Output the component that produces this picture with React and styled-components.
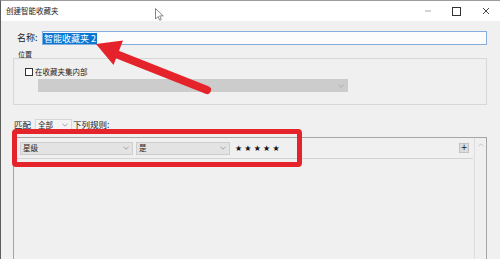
import React from 'react';
import styled, { createGlobalStyle } from 'styled-components';

// page reset
const GlobalStyle = createGlobalStyle`
  html, body {
    margin: 0;
    padding: 0;
    background: #f0f0f0;
  }
  body {
    font-family: "Noto Sans CJK SC", "Noto Sans", sans-serif;
    color: #000;
  }
  * {
    box-sizing: border-box;
  }
`;

const Window = styled.div`
  position: relative;
  width: 500px;
  height: 259px;
  overflow: hidden;
  display: flex;
  flex-direction: column;
  background: #f0f0f0;
  border-left: 1px solid #5c5c5c;
  border-top: 1px solid #9c9c9c;
`;

const TitleBar = styled.div`
  display: flex;
  align-items: center;
  height: 20px;
  flex: none;
  background: #fff;
  padding-left: 5px;
`;

const Title = styled.span`
  font-size: 7.5px;
  line-height: 10px;
  color: #1a1a1a;
`;

const Controls = styled.div`
  display: flex;
  margin-left: auto;
  height: 100%;
`;

const ControlCell = styled.div`
  width: 29px;
  height: 100%;
  display: flex;
  align-items: center;
  justify-content: center;
  color: ${({ dim }) => (dim ? '#a8a8a8' : '#333')};
`;

const Body = styled.div`
  flex: 1;
  display: flex;
  flex-direction: column;
  padding: 0 13px 0 12px;
`;

const NameRow = styled.div`
  display: flex;
  align-items: center;
  margin-top: 10px;
  height: 14px;
`;

const NameLabel = styled.span`
  flex: none;
  width: 25px;
  margin-left: 4px;
  font-size: 9px;
  line-height: 14px;
  color: #222;
`;

const NameInput = styled.div`
  flex: 1;
  height: 14px;
  border: 1px solid #86aedc;
  background: #fcfcfc;
  display: flex;
  align-items: center;
`;

const Selected = styled.span`
  background: #0a77d5;
  color: #fff;
  font-size: 9px;
  line-height: 11px;
  height: 11px;
  padding: 0 1px;
  white-space: pre;
`;

const GroupLabel = styled.div`
  margin: 5px 0 0 5px;
  font-size: 7px;
  line-height: 8px;
  height: 8px;
  color: #222;
`;

const GroupBox = styled.div`
  height: 47px;
  border: 1px solid #d7d7d7;
  padding: 9px 0 0 11px;
`;

const CheckRow = styled.label`
  display: flex;
  align-items: center;
  height: 8px;
  gap: 2px;
  font-size: 7.5px;
  line-height: 8px;
  color: #222;
`;

const CheckBox = styled.span`
  width: 8px;
  height: 8px;
  border: 1px solid #333;
  background: #fff;
`;

const Select = styled.div`
  display: flex;
  align-items: center;
  width: ${({ w }) => w}px;
  height: ${({ h }) => h || 13}px;
  margin-left: ${({ ml }) => ml || 0}px;
  margin-top: ${({ mt }) => mt || 0}px;
  padding: 0 3px 0 2px;
  background: ${({ bg }) => bg || '#e3e3e3'};
  border: 1px solid ${({ line }) => line || '#cdcdcd'};
  font-size: 7.5px;
  line-height: 10px;
  color: #1a1a1a;
  flex: none;
`;

const SelectText = styled.span`
  flex: 1;
`;

const MatchRow = styled.div`
  display: flex;
  align-items: center;
  margin-top: 14px;
  height: 11px;
`;

const MatchLabel = styled.span`
  margin-left: 1px;
  margin-right: ${({ mr }) => mr || 0}px;
  font-size: 8.5px;
  line-height: 11px;
  color: #222;
`;

const RuleList = styled.div`
  flex: 1;
  display: flex;
  margin-top: 7px;
  border: 1px solid #a6a6a6;
  border-bottom: none;
`;

const RuleArea = styled.div`
  flex: 1;
  padding-right: 1px;
`;

const RuleRow = styled.div`
  display: flex;
  align-items: center;
  height: 21px;
  padding: 0 4px 0 6px;
  border-bottom: 1px solid #d4d4d4;
`;

const Stars = styled.span`
  margin-left: 5px;
  font-family: "DejaVu Sans", sans-serif;
  font-size: 8px;
  letter-spacing: 2.2px;
  color: #111;
`;

const PlusButton = styled.div`
  margin-left: auto;
  width: 10px;
  height: 10px;
  background: #dcdcdc;
  border: 1px solid #c2c2c2;
  display: flex;
  align-items: center;
  justify-content: center;
  font-family: "DejaVu Sans", sans-serif;
  font-size: 8px;
  line-height: 8px;
  color: #222;
`;

const ScrollBar = styled.div`
  width: 12px;
  border-left: 1px solid #dedede;
  display: flex;
  justify-content: center;
  padding-top: 5px;
`;

const Highlight = styled.div`
  position: absolute;
  left: 11px;
  top: 128px;
  width: 290px;
  height: 38px;
  border: 5px solid #e4232b;
  border-radius: 4px;
  pointer-events: none;
`;

const Overlay = styled.svg`
  position: absolute;
  left: -1px;
  top: -1px;
  pointer-events: none;
`;

const Chevron = ({ color = '#9a9a9a' }) => (
  <svg width='6' height='4' viewBox='0 0 6 4'>
    <path d='M0.5 0.8 L3 3.2 L5.5 0.8' fill='none' stroke={color} strokeWidth='0.9' />
  </svg>
);

const App = () => (
  <>
    <GlobalStyle />
    <Window>
      <TitleBar>
        <Title>创建智能收藏夹</Title>
        <Controls>
          <ControlCell dim>
            <svg width='8' height='2'>
              <line x1='1' y1='1' x2='7' y2='1' stroke='currentColor' strokeWidth='1' />
            </svg>
          </ControlCell>
          <ControlCell>
            <svg width='9' height='9'>
              <rect x='0.5' y='0.5' width='8' height='8' fill='none' stroke='currentColor' />
            </svg>
          </ControlCell>
          <ControlCell>
            <svg width='8' height='8'>
              <path d='M1 1 L7 7 M7 1 L1 7' stroke='currentColor' strokeWidth='0.9' />
            </svg>
          </ControlCell>
        </Controls>
      </TitleBar>

      <Body>
        <NameRow>
          <NameLabel>名称:</NameLabel>
          <NameInput>
            <Selected>智能收藏夹 2</Selected>
          </NameInput>
        </NameRow>

        <GroupLabel>位置</GroupLabel>
        <GroupBox>
          <CheckRow>
            <CheckBox />
            在收藏夹集内部
          </CheckRow>
          <Select w={310} ml={13} mt={3} bg='#cccccc' line='#cccccc'>
            <SelectText />
            <Chevron color='#a9a9a9' />
          </Select>
        </GroupBox>

        <MatchRow>
          <MatchLabel mr={4}>匹配</MatchLabel>
          <Select w={37} h={11} bg='#f4f4f4' line='#d6d6d6'>
            <SelectText>全部</SelectText>
            <Chevron />
          </Select>
          <MatchLabel>下列规则:</MatchLabel>
        </MatchRow>

        <RuleList>
          <RuleArea>
            <RuleRow>
              <Select w={113}>
                <SelectText>星级</SelectText>
                <Chevron />
              </Select>
              <Select w={94} ml={3}>
                <SelectText>是</SelectText>
                <Chevron />
              </Select>
              <Stars>★★★★★</Stars>
              <PlusButton>+</PlusButton>
            </RuleRow>
          </RuleArea>
          <ScrollBar>
            <svg width='6' height='4' viewBox='0 0 6 4'>
              <path d='M0.5 3.2 L3 0.8 L5.5 3.2' fill='none' stroke='#c4c4c4' strokeWidth='0.9' />
            </svg>
          </ScrollBar>
        </RuleList>
      </Body>

      <Highlight />

      <Overlay width='500' height='259' viewBox='0 0 500 259'>
        {/* red annotation arrow */}
        <line x1='207' y1='90' x2='116' y2='54' stroke='#e4232b' strokeWidth='8' strokeLinecap='round' />
        <polygon points='96,44 123,40.5 113.5,65' fill='#e4232b' />
        {/* mouse pointer */}
        <path
          d='M155.5 8.5 L155.5 19 L158 16.5 L159.7 20.2 L161.3 19.5 L159.7 15.9 L163.2 15.9 Z'
          fill='#fff'
          stroke='#555'
          strokeWidth='0.7'
          strokeLinejoin='round'
        />
      </Overlay>
    </Window>
  </>
);

export default App;
